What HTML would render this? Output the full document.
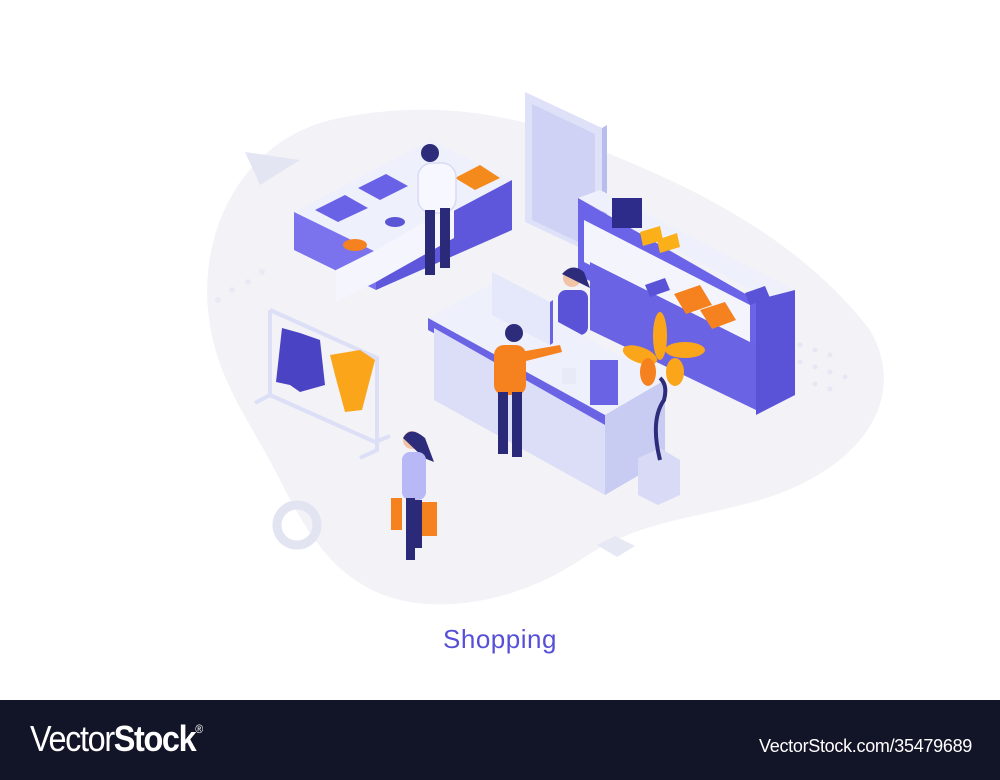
<!DOCTYPE html>
<html><head><meta charset="utf-8"><style>
html,body{margin:0;padding:0;background:#fff;width:1000px;height:780px;overflow:hidden;font-family:"Liberation Sans",sans-serif}
#art{position:absolute;left:0;top:0}
.t{position:absolute;left:0;width:1000px;text-align:center;top:624px;font-size:26px;color:#5650d8;letter-spacing:0.5px}
.foot{position:absolute;left:0;top:700px;width:1000px;height:80px;background:#121427;color:#fff}
.logo{position:absolute;left:30px;top:18px;font-size:36px;letter-spacing:-1.5px;font-weight:300;transform:scaleX(0.9);transform-origin:left}
.logo b{font-weight:bold}
.logo sup{font-size:12px;vertical-align:top;position:relative;top:4px}
.url{position:absolute;right:28px;top:36px;font-size:18px;letter-spacing:-0.3px}
</style></head><body>
<svg id="art" width="1000" height="700" viewBox="0 0 1000 700">
<path d="M340 118 C430 100 520 112 600 150 C700 190 800 240 870 330 C910 400 860 470 760 500 C690 520 640 520 580 560 C520 600 450 612 400 600 C340 585 310 540 280 480 C250 420 215 380 208 310 C200 220 250 135 340 118Z" fill="#f2f2f7"/>
<polygon points="245,152 300,160 260,185" fill="#e3e5f3"/>
<circle cx="297" cy="525" r="20" fill="none" stroke="#e2e4f2" stroke-width="9"/>
<polygon points="597,545 615,536 635,546 617,557" fill="#e6e8f4"/>
<g fill="#e9eaf3"><circle cx="218" cy="300" r="3"/><circle cx="232" cy="290" r="3"/><circle cx="248" cy="282" r="3"/><circle cx="262" cy="272" r="3"/></g>
<g fill="#e6e7f2"><circle cx="800" cy="345" r="2.5"/><circle cx="815" cy="350" r="2.5"/><circle cx="830" cy="355" r="2.5"/><circle cx="800" cy="362" r="2.5"/><circle cx="815" cy="367" r="2.5"/><circle cx="830" cy="372" r="2.5"/><circle cx="845" cy="377" r="2.5"/><circle cx="815" cy="384" r="2.5"/><circle cx="830" cy="389" r="2.5"/></g>
<!-- door -->
<polygon points="525,92 602,128 602,258 525,222" fill="#dfe1f8"/>
<polygon points="532,104 595,134 595,250 532,220" fill="#cfd2f4"/>
<polygon points="602,128 607,125 607,256 602,258" fill="#b9bdee"/>
<!-- left counter -->
<polygon points="294,212 430,140 512,180 376,252" fill="#eef0fc"/>
<polygon points="294,212 376,252 376,290 294,250" fill="#7b73ee"/>
<polygon points="376,252 512,180 512,230 376,290" fill="#5e57dc"/>
<polygon points="336,270 376,250 454,205 454,238 376,282 336,302" fill="#f5f5fd"/>
<polygon points="315,210 345,195 368,208 338,222" fill="#6a62e6"/>
<polygon points="358,188 386,174 408,186 380,200" fill="#6a62e6"/>
<polygon points="455,178 480,165 500,178 475,190" fill="#f58a1c"/>
<ellipse cx="355" cy="245" rx="12" ry="6" fill="#f5821f"/>
<ellipse cx="395" cy="222" rx="10" ry="5" fill="#5b55d6"/>
<!-- man at left counter -->
<circle cx="430" cy="153" r="9" fill="#2d2c7a"/>
<rect x="418" y="163" width="38" height="50" rx="14" fill="#f7f7ff" stroke="#d8daf3" stroke-width="1.5"/>
<rect x="425" y="210" width="10" height="65" fill="#2b2a78"/>
<rect x="440" y="208" width="10" height="60" fill="#2b2a78"/>
<!-- right shelf -->
<polygon points="578,198 600,190 795,290 770,300" fill="#eef0fc"/>
<polygon points="578,198 578,275 756,365 756,300" fill="#6c64e8"/>
<polygon points="584,220 584,262 750,345 750,305" fill="#f4f4fd"/>
<polygon points="590,262 756,345 756,410 590,330" fill="#6a63e4"/>
<polygon points="756,300 795,290 795,395 756,415" fill="#5a53d8"/>
<rect x="612" y="198" width="30" height="30" fill="#2e2c8a"/>
<polygon points="640,232 660,226 663,240 643,246" fill="#fbb01a"/>
<polygon points="657,240 677,233 680,247 660,253" fill="#fbb01a"/>
<polygon points="645,285 665,278 670,290 650,297" fill="#5a53d8"/>
<polygon points="674,294 700,285 712,305 686,314" fill="#f5821f"/>
<polygon points="700,310 725,302 736,320 712,329" fill="#f5821f"/>
<polygon points="745,293 765,286 770,298 750,305" fill="#5a53d8"/>
<!-- cashier -->
<circle cx="572" cy="278" r="9" fill="#f2c4a7"/>
<path d="M562 274 Q572 262 584 272 L590 288 Z" fill="#2d2c7a"/>
<rect x="558" y="290" width="30" height="45" rx="8" fill="#5a53d8"/>
<!-- checkout counter -->
<polygon points="428,318 490,285 665,380 605,415" fill="#eef0fc"/>
<polygon points="428,318 428,330 605,425 605,415" fill="#6a63e4"/>
<polygon points="434,328 605,425 605,495 434,400" fill="#dcdef8"/>
<polygon points="605,415 665,380 665,460 605,495" fill="#c8cbf2"/>
<polygon points="492,272 550,302 550,345 492,315" fill="#e5e7fa"/>
<polygon points="550,302 553,300 553,343 550,345" fill="#6a63e4"/>
<rect x="590" y="360" width="28" height="45" fill="#6a63e4"/>
<rect x="562" y="368" width="14" height="16" fill="#e9eaf8"/>
<!-- orange man -->
<circle cx="514" cy="333" r="9" fill="#2d2c7a"/>
<rect x="494" y="345" width="32" height="50" rx="10" fill="#f5821f"/>
<polygon points="520,352 560,345 562,352 522,362" fill="#f5821f"/>
<rect x="498" y="392" width="10" height="62" fill="#2b2a78"/>
<rect x="512" y="392" width="10" height="65" fill="#2b2a78"/>
<!-- plant -->
<polygon points="638,458 660,448 680,460 680,495 658,505 638,495" fill="#d9dbf6"/>
<path d="M660 460 Q650 420 664 400 Q668 385 660 378" stroke="#2d2c7a" stroke-width="4" fill="none"/>
<g fill="#fba51a">
<ellipse cx="660" cy="336" rx="7" ry="24"/>
<ellipse cx="640" cy="355" rx="18" ry="8" transform="rotate(20 640 355)"/>
<ellipse cx="685" cy="350" rx="20" ry="8"/>
<ellipse cx="648" cy="372" rx="8" ry="14" fill="#f5821f"/>
<ellipse cx="675" cy="372" rx="9" ry="14"/>
</g>
<!-- clothes rack -->
<g stroke="#dcdff6" stroke-width="4" fill="none">
<path d="M270 310 L270 395 L255 403"/>
<path d="M270 310 L377 358 L377 450 L360 458"/>
<path d="M270 395 L375 442 L390 436"/>
</g>
<path d="M282 328 L300 333 L320 340 L325 385 L300 392 L290 385 L276 382Z" fill="#4a43c4"/>
<path d="M330 355 L360 350 L375 360 L362 410 L345 412 L335 375Z" fill="#fba51a"/>
<!-- woman -->
<circle cx="412" cy="440" r="9" fill="#f2c4a7"/>
<path d="M403 438 Q410 425 425 438 L434 462 L424 458Z" fill="#2d2c7a"/>
<rect x="402" y="452" width="24" height="48" rx="8" fill="#b7b8f5"/>
<rect x="391" y="498" width="11" height="32" fill="#f5821f"/>
<rect x="420" y="502" width="17" height="34" fill="#f5821f"/>
<rect x="406" y="498" width="9" height="62" fill="#2b2a78"/>
<rect x="414" y="500" width="8" height="48" fill="#2b2a78"/>
</svg>
<div class="t">Shopping</div>
<div class="foot"><div class="logo">Vector<b>Stock</b><sup>®</sup></div><div class="url">VectorStock.com/35479689</div></div>
</body></html>
